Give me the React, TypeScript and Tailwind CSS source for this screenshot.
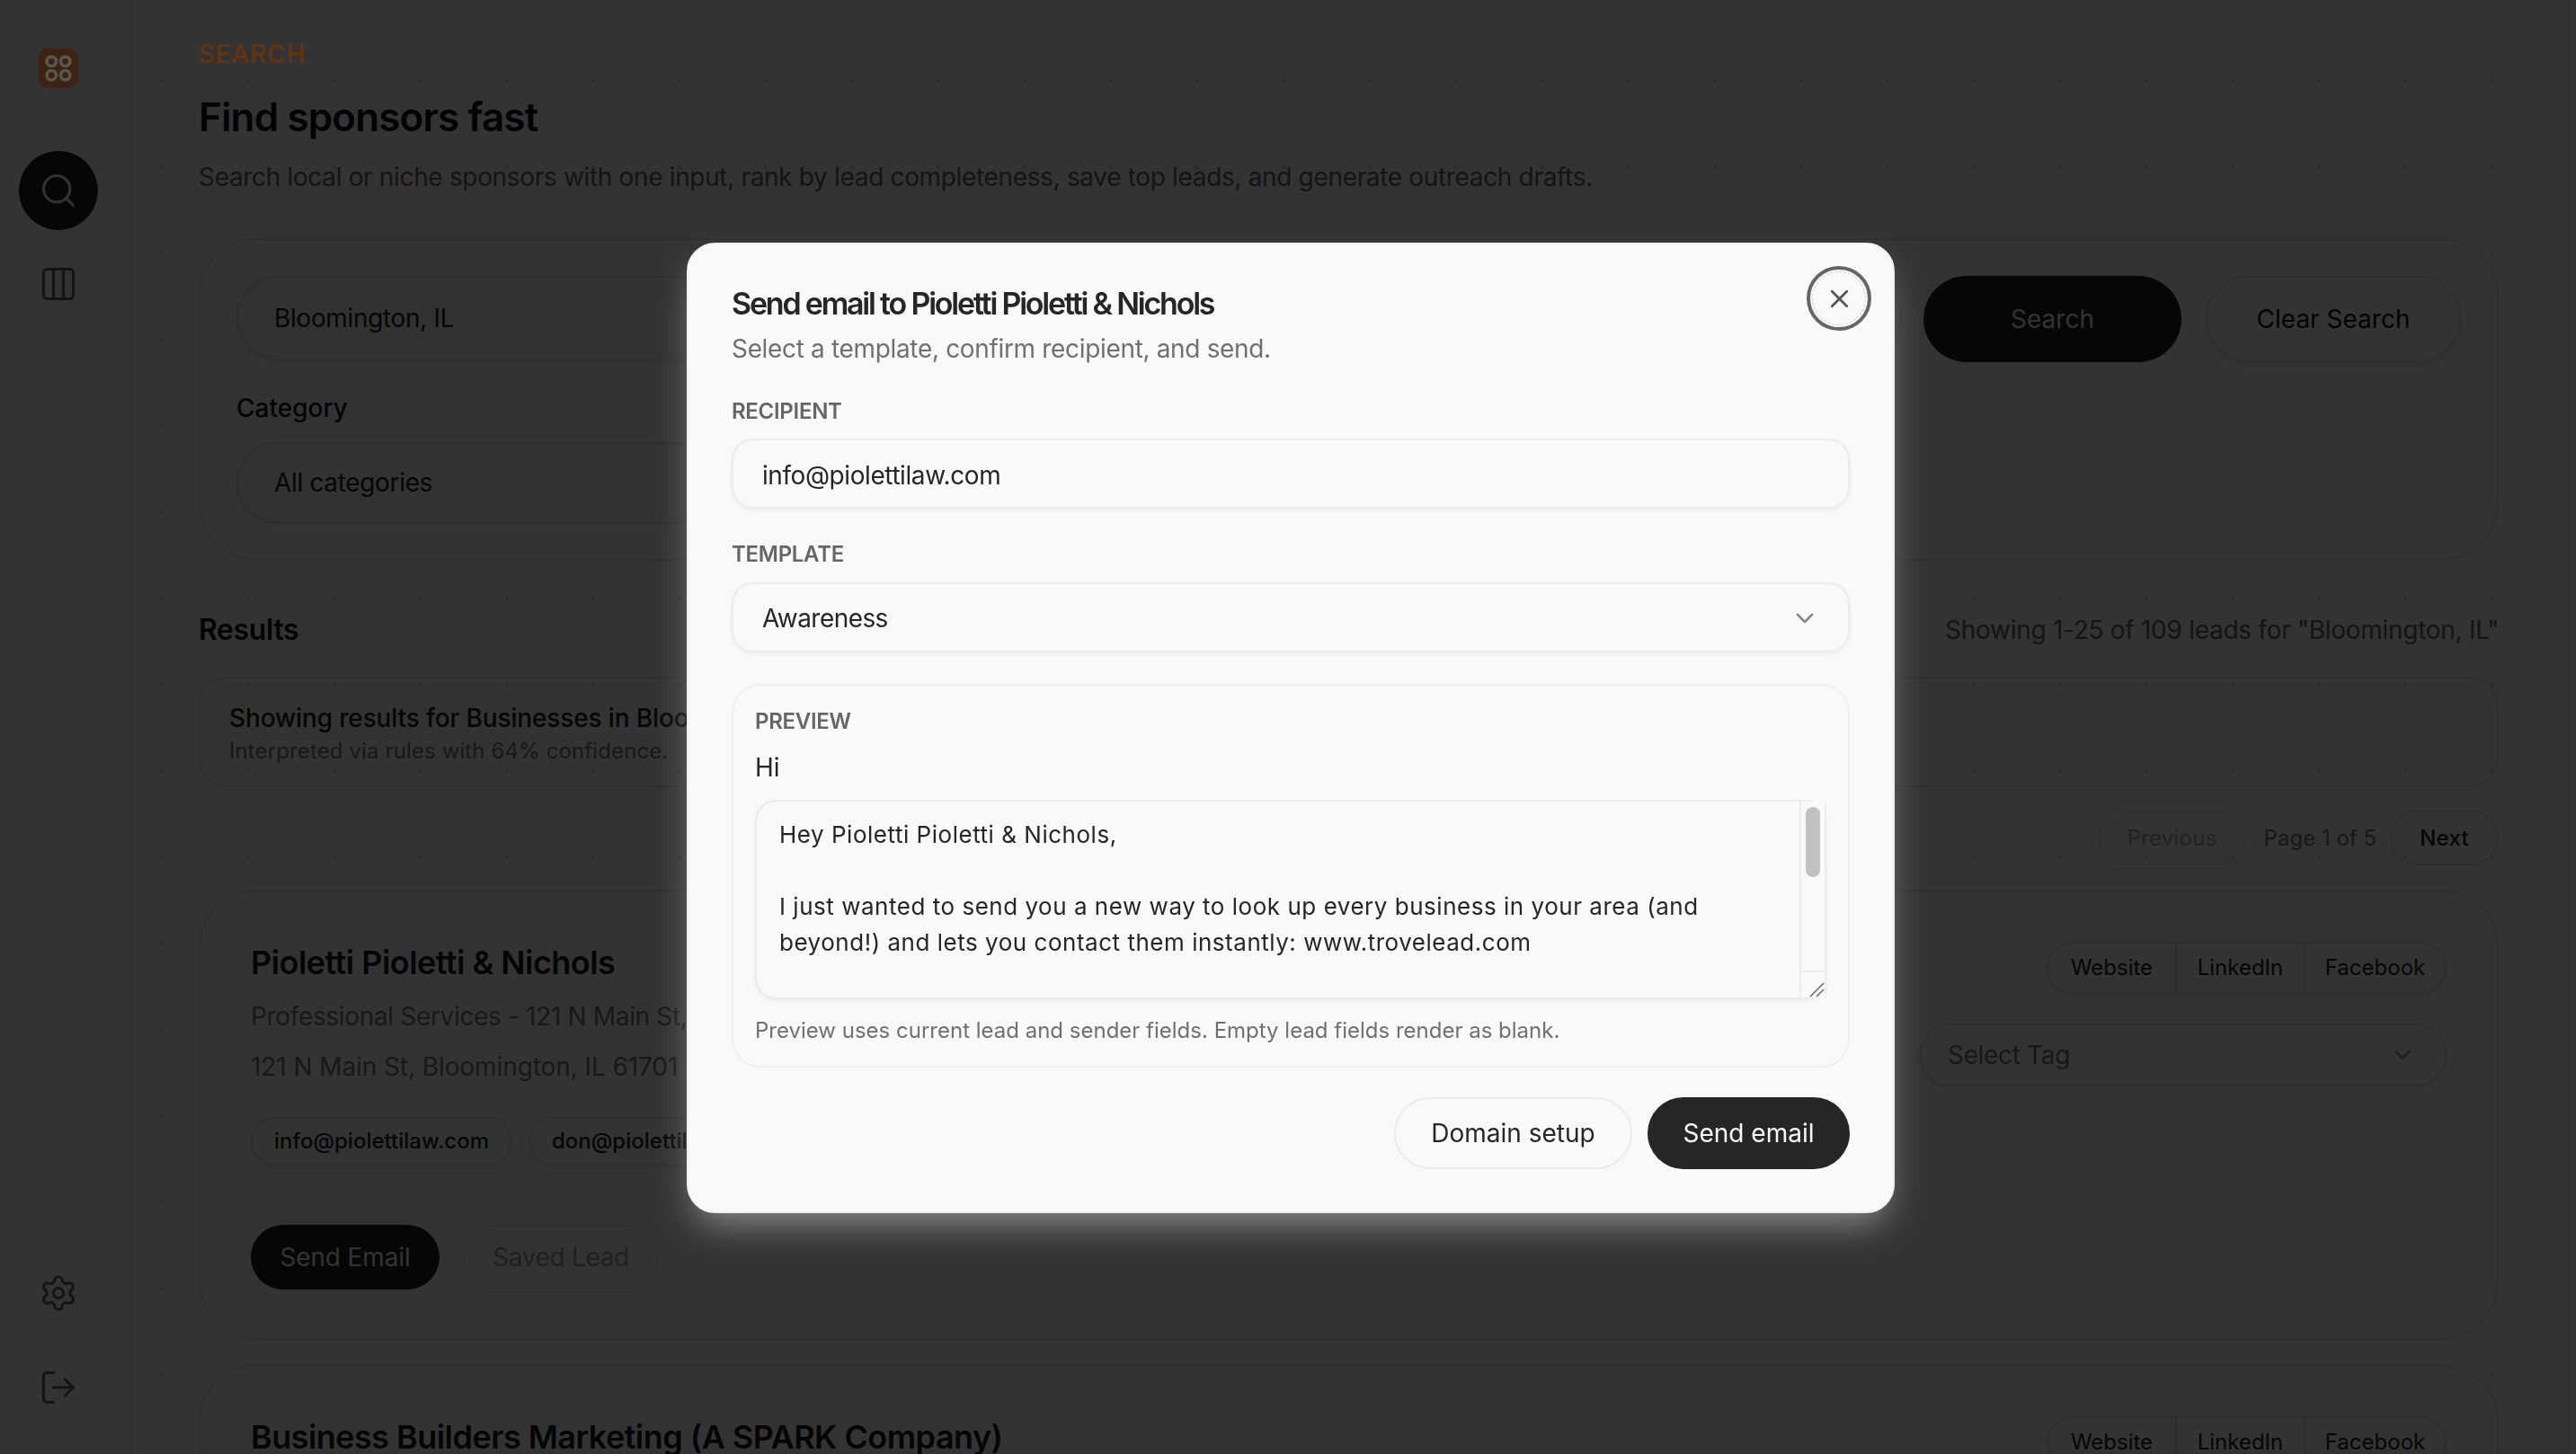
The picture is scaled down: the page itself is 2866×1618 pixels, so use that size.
import { ChevronDown, Columns3, LogOut, Search, Settings, X } from "lucide-react";

function Logo() {
  return (
    <div className="relative z-10 flex h-[44px] w-[44px] items-center justify-center rounded-[11px] bg-[#3d2310]">
      <svg width="36" height="36" viewBox="0 0 36 36" fill="none" stroke="#5a5650" strokeWidth="3.6">
        <circle cx="10.3" cy="10.3" r="5.2" />
        <circle cx="25.7" cy="10.3" r="5.2" />
        <circle cx="10.3" cy="25.7" r="5.2" />
        <circle cx="25.7" cy="25.7" r="5.2" />
      </svg>
    </div>
  );
}

function NavIcon({ children, active }: { children: React.ReactNode; active?: boolean }) {
  return (
    <div
      className={
        active
          ? "flex h-[88px] w-[88px] items-center justify-center rounded-full bg-[#1f1f1f] text-[#fafafa]"
          : "flex h-[88px] w-[88px] items-center justify-center rounded-full text-[#666666]"
      }
    >
      {children}
    </div>
  );
}

function LinkGroup() {
  return (
    <div className="flex h-[58px] w-[445px] items-center rounded-full border-2 border-[#e2e2e2] text-[24px] text-[#222222] shadow-[0_2px_4px_rgba(0,0,0,0.08)]">
      <span className="flex h-full w-[141px] items-center justify-center">Website</span>
      <span className="flex h-full w-[145px] items-center justify-center border-x-2 border-[#e2e2e2]">LinkedIn</span>
      <span className="flex h-full flex-1 items-center justify-center">Facebook</span>
    </div>
  );
}

function LeadCard({ title, full }: { title: string; full?: boolean }) {
  return (
    <section className="mt-[27px] flex justify-between rounded-[64px] border-2 border-[#e6e6e6] bg-[#ffffff] px-[56px] pb-[54px] pt-[56px]">
      <div className="min-w-0 flex-1">
        <h3 className="text-[36px] font-semibold leading-[46px] tracking-[-0.015em] text-[#1a1a1a]">{title}</h3>
        {full && (
          <>
            <p className="mt-[15px] text-[28px] leading-[44px] tracking-[-0.012em] text-[#777777]">
              Professional Services - 121 N Main St, Bloomington, IL 61701
            </p>
            <p className="mt-[12px] text-[28px] leading-[44px] tracking-[-0.003em] text-[#777777]">
              121 N Main St, Bloomington, IL 61701
            </p>
            <div className="mt-[34px] flex gap-[18px]">
              <span className="flex h-[54px] items-center rounded-full border-2 border-[#e2e2e2] px-[24px] text-[24px] font-medium text-[#222222] shadow-[0_2px_4px_rgba(0,0,0,0.08)]">
                info@piolettilaw.com
              </span>
              <span className="flex h-[54px] items-center rounded-full border-2 border-[#e2e2e2] px-[24px] text-[24px] font-medium text-[#222222] shadow-[0_2px_4px_rgba(0,0,0,0.08)]">
                don@piolettilaw.com
              </span>
            </div>
            <div className="mt-[66px] flex gap-[26px]">
              <span className="flex h-[72px] w-[210px] items-center justify-center rounded-full bg-[#1f1f1f] text-[28px] tracking-[-0.005em] text-[#fafafa]">
                Send Email
              </span>
              <span className="flex h-[72px] w-[218px] items-center justify-center rounded-full border-2 border-[#ededed] text-[28px] tracking-[-0.012em] text-[#999999]">
                Saved Lead
              </span>
            </div>
          </>
        )}
      </div>
      <div className="flex shrink-0 flex-col items-end">
        <LinkGroup />
        {full && (
          <div className="mt-[33px] flex h-[70px] w-[587px] items-center justify-between rounded-full border-2 border-[#e2e2e2] pl-[30px] pr-[32px] text-[28px] tracking-[-0.012em] text-[#777777] shadow-[0_2px_4px_rgba(0,0,0,0.08)]">
            <span>Select Tag</span>
            <ChevronDown size={30} strokeWidth={2} className="text-[#999999]" />
          </div>
        )}
      </div>
    </section>
  );
}

const body =
  "Hey Pioletti Pioletti & Nichols,\n\nI just wanted to send you a new way to look up every business in your area (and beyond!) and lets you contact them instantly: www.trovelead.com\n\nBest,\nThe Trovelead team";

export default function App() {
  return (
    <div className="relative flex h-[1618px] w-[2866px] overflow-hidden bg-[#f8fdfb] font-['Inter',sans-serif]">
      <aside className="flex w-[146px] shrink-0 flex-col items-center border-r-2 border-[#eeeeee] bg-[#ffffff] pb-[30px] pr-[14px] pt-[54px]">
        <Logo />
        <nav className="mt-[70px] flex flex-col gap-[16px]">
          <NavIcon active>
            <Search size={44} strokeWidth={1.7} />
          </NavIcon>
          <NavIcon>
            <Columns3 size={44} strokeWidth={1.7} />
          </NavIcon>
        </nav>
        <div className="mt-auto flex flex-col gap-[17px]">
          <NavIcon>
            <Settings size={44} strokeWidth={1.7} />
          </NavIcon>
          <NavIcon>
            <LogOut size={44} strokeWidth={1.7} />
          </NavIcon>
        </div>
      </aside>

      <main className="min-w-0 flex-1 bg-[radial-gradient(circle_at_34px_90px,#dcdcdc_2px,transparent_2.5px)] bg-[size:96px_96px] pl-[75px] pr-[77px] pt-[42px]">
        <p className="relative z-10 text-[28px] font-semibold leading-[36px] tracking-[0.025em] text-[#633410]">SEARCH</p>
        <h1 className="mt-[22px] text-[44px] font-semibold leading-[60px] tracking-[-0.02em] text-[#111111]">
          Find sponsors fast
        </h1>
        <p className="mt-[15px] text-[28px] leading-[44px] tracking-[-0.012em] text-[#666666]">
          Search local or niche sponsors with one input, rank by lead completeness, save top leads, and generate outreach
          drafts.
        </p>

        <section className="mt-[46px] rounded-[64px] border-2 border-[#e6e6e6] bg-[#ffffff] px-[40px] pb-[40px] pt-[40px]">
          <div className="flex items-start gap-[24px]">
            <div className="flex h-[94px] flex-1 items-center rounded-full border-2 border-[#e2e2e2] bg-[#fafafa] px-[40px] text-[28px] tracking-[-0.012em] text-[#222222] shadow-[0_2px_6px_rgba(0,0,0,0.08)]">
              Bloomington, IL
            </div>
            <span className="flex h-[96px] w-[287px] items-center justify-center rounded-full bg-[#1f1f1f] text-[28px] text-[#fafafa]">
              Search
            </span>
            <span className="ml-[3px] flex h-[96px] w-[284px] items-center justify-center rounded-full border-2 border-[#e2e2e2] text-[28px] text-[#111111] shadow-[0_4px_10px_rgba(0,0,0,0.08)]">
              Clear Search
            </span>
          </div>
          <p className="mt-[31px] text-[28px] font-medium leading-[40px] text-[#111111]">Category</p>
          <div className="mt-[18px] flex h-[90px] w-[1100px] items-center rounded-full border-2 border-[#e2e2e2] bg-[#fafafa] px-[40px] text-[28px] tracking-[-0.012em] text-[#222222] shadow-[0_2px_6px_rgba(0,0,0,0.08)]">
            All categories
          </div>
        </section>

        <div className="mt-[57px] flex items-center justify-between">
          <h2 className="text-[32px] font-semibold leading-[40px] tracking-[-0.0125em] text-[#111111]">Results</h2>
          <p className="text-[28px] leading-[40px] tracking-[-0.01em] text-[#666666]">
            Showing 1-25 of 109 leads for "Bloomington, IL"
          </p>
        </div>

        <div className="mt-[32px] h-[123px] rounded-[32px] border-2 border-[#e6e6e6] pl-[32px] pt-[26px]">
          <p className="text-[28px] font-medium leading-[36px] tracking-[-0.005em] text-[#222222]">
            Showing results for Businesses in Bloomington, IL
          </p>
          <p className="mt-[1px] text-[24px] leading-[36px] tracking-[0.005em] text-[#777777]">
            Interpreted via rules with 64% confidence.
          </p>
        </div>

        <div className="mt-[26px] flex items-center justify-end text-[24px] tracking-[0.01em]">
          <span className="flex h-[61px] w-[166px] items-center justify-center rounded-full border-2 border-[#ededed] text-[#aaaaaa]">
            Previous
          </span>
          <span className="ml-[19px] tracking-normal text-[#777777]">Page 1 of 5</span>
          <span className="ml-[15px] flex h-[61px] w-[121px] items-center justify-center rounded-full border-2 border-[#e2e2e2] font-medium text-[#222222]">
            Next
          </span>
        </div>

        <LeadCard title="Pioletti Pioletti & Nichols" full />
        <LeadCard title="Business Builders Marketing (A SPARK Company)" />
      </main>
      <div className="w-[9px] shrink-0 border-l-2 border-[#eeeeee]" />

      <div className="fixed inset-0 flex items-center justify-center bg-black/80 pl-[6px] pt-[2px]">
        <div className="relative w-[1344px] rounded-[32px] border-2 border-[#f0f0f0] bg-[#f9f9f9] px-[48px] pb-[47px] pt-[42px] shadow-[0_20px_40px_-10px_rgba(255,255,255,0.45)]">
          <button className="absolute right-[24px] top-[24px] flex h-[72px] w-[72px] items-center justify-center rounded-full border-[4px] border-[#666666] text-[#555555]">
            <span className="flex h-[60px] w-[60px] items-center justify-center rounded-full border border-dashed border-[#cccccc]">
              <X size={33} strokeWidth={2} />
            </span>
          </button>
          <h2 className="text-[34px] font-semibold leading-[48px] tracking-[-0.065em] text-[#262626]">
            Send email to Pioletti Pioletti &amp; Nichols
          </h2>
          <p className="mt-[4px] text-[28px] leading-[44px] tracking-[-0.012em] text-[#707070]">
            Select a template, confirm recipient, and send.
          </p>

          <p className="mt-[32px] text-[24px] font-semibold leading-[32px] tracking-[-0.012em] text-[#666666]">RECIPIENT</p>
          <div className="mt-[14px] flex h-[78px] items-center rounded-[24px] border-2 border-[#ebebeb] px-[32px] pt-[3px] text-[28px] tracking-[-0.015em] text-[#262626] shadow-[0_2px_4px_rgba(0,0,0,0.06)]">
            info@piolettilaw.com
          </div>

          <p className="mt-[35px] text-[24px] font-semibold leading-[32px] tracking-[-0.012em] text-[#666666]">TEMPLATE</p>
          <div className="mt-[15px] flex h-[78px] items-center justify-between rounded-[24px] border-2 border-[#ebebeb] pl-[32px] pr-[32px] pt-[2px] text-[28px] tracking-[-0.02em] text-[#262626] shadow-[0_2px_4px_rgba(0,0,0,0.06)]">
            <span>Awareness</span>
            <ChevronDown size={32} strokeWidth={2} className="text-[#888888]" />
          </div>

          <div className="mt-[35px] rounded-[32px] border-2 border-[#efefef] px-[24px] pb-[21px] pt-[23px]">
            <p className="pt-[1px] text-[24px] font-semibold leading-[32px] tracking-[-0.012em] text-[#666666]">PREVIEW</p>
            <p className="mt-[15px] text-[28px] leading-[40px] text-[#262626]">Hi</p>
            <div className="relative mt-[16px] h-[222px]">
              <textarea
                readOnly
                value={body}
                className="block h-full w-full resize-none overflow-hidden rounded-[24px] border-2 border-[#ebebeb] bg-[#f9f9f9] py-[17px] pl-[25px] pr-[40px] text-[26px] leading-[40px] tracking-[0.02em] text-[#262626] shadow-[0_2px_4px_rgba(0,0,0,0.06)] outline-none"
              />
              <div className="absolute inset-y-[2px] right-0 flex w-[30px] flex-col border-x-2 border-[#ededed] bg-[#fafafa]">
                <div className="mx-auto mt-[6px] h-[78px] w-[16px] rounded-full bg-[#c1c1c1]" />
                <div className="mt-auto flex h-[30px] items-end justify-end border-t-2 border-[#ededed]">
                  <svg width="20" height="20" viewBox="0 0 20 20" stroke="#666666" strokeWidth="1.5">
                    <path d="M4 19 19 4M11 19 19 11" />
                  </svg>
                </div>
              </div>
            </div>
            <p className="mt-[17px] text-[24px] leading-[36px] text-[#707070]">
              Preview uses current lead and sender fields. Empty lead fields render as blank.
            </p>
          </div>

          <div className="mt-[33px] flex justify-end gap-[17px]">
            <span className="flex h-[80px] w-[265px] items-center justify-center rounded-full border-2 border-[#ebebeb] text-[28px] text-[#262626]">
              Domain setup
            </span>
            <span className="flex h-[80px] w-[225px] items-center justify-center rounded-full bg-[#262626] text-[28px] text-[#f9f9f9]">
              Send email
            </span>
          </div>
        </div>
      </div>
    </div>
  );
}
